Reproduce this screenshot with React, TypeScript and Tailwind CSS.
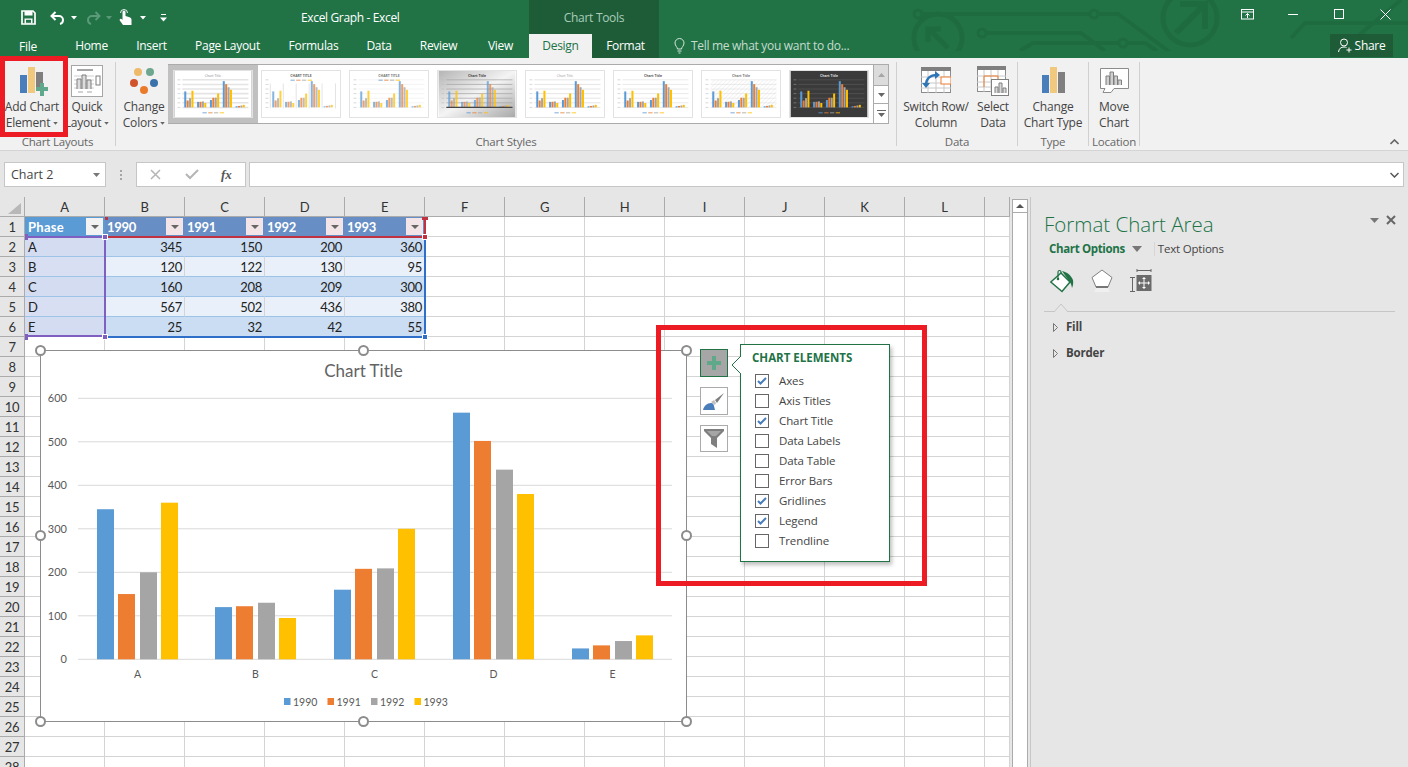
import React from "react";

const COLORS = ["#5b9bd5", "#ed7d31", "#a5a5a5", "#ffc000"];
const YEARS = ["1990", "1991", "1992", "1993"];
const ROWS = [
  { name: "A", values: [345, 150, 200, 360] },
  { name: "B", values: [120, 122, 130, 95] },
  { name: "C", values: [160, 208, 209, 300] },
  { name: "D", values: [567, 502, 436, 380] },
  { name: "E", values: [25, 32, 42, 55] },
];
const COLUMNS = ["A", "B", "C", "D", "E", "F", "G", "H", "I", "J", "K", "L", ""];

const TABS = [
  { label: "Home", width: "w-[61px]" },
  { label: "Insert", width: "w-[59px]" },
  { label: "Page Layout", width: "w-[93px]" },
  { label: "Formulas", width: "w-[79px]" },
  { label: "Data", width: "w-[52px]" },
  { label: "Review", width: "w-[67px]" },
  { label: "View", width: "w-[57px]" },
];

const ELEMENTS = [
  { label: "Axes", on: true },
  { label: "Axis Titles", on: false },
  { label: "Chart Title", on: true },
  { label: "Data Labels", on: false },
  { label: "Data Table", on: false },
  { label: "Error Bars", on: false },
  { label: "Gridlines", on: true },
  { label: "Legend", on: true },
  { label: "Trendline", on: false },
];

const HANDLES = [
  "left-[35px] top-[345px]",
  "left-[358px] top-[345px]",
  "left-[681px] top-[345px]",
  "left-[35px] top-[530px]",
  "left-[681px] top-[530px]",
  "left-[35px] top-[716px]",
  "left-[358px] top-[716px]",
  "left-[681px] top-[716px]",
];

const THUMBS = [
  { title: "Chart Title", titleColor: "#8a8a8a", bg: "#ffffff", grid: "#e4e4e4", gridW: 1.6 },
  { title: "CHART TITLE", titleColor: "#666666", bg: "#ffffff", grid: "#ffffff", gridW: 0, bold: true, top: true, dividers: true, pale: true },
  { title: "CHART TITLE", titleColor: "#777777", bg: "#ffffff", grid: "#ececec", gridW: 0.6, bold: true, top: true, pale: true },
  { title: "Chart Title", titleColor: "#444444", bg: "url(#thumbGray)", grid: "#a8a8a8", gridW: 0.8, bold: true, axis: "#444444", pale: true },
  { title: "Chart Title", titleColor: "#999999", bg: "#ffffff", grid: "#e4e4e4", gridW: 1 },
  { title: "Chart Title", titleColor: "#555555", bg: "#ffffff", grid: "#e4e4e4", gridW: 0.8, bold: true },
  { title: "Chart Title", titleColor: "#777777", bg: "#ffffff", grid: "#d8d8d8", gridW: 0.5, bold: true, hatch: true },
  { title: "Chart Title", titleColor: "#dddddd", bg: "#3b3b3b", grid: "#5c5c5c", gridW: 0.6, bold: true },
];

type Thumb = (typeof THUMBS)[number] & { top?: boolean; dividers?: boolean; pale?: boolean; axis?: string; hatch?: boolean };

function MiniChart({ style, index }: { style: Thumb; index: number }) {
  const base = 38;
  const gx = [10, 23.4, 36.8, 50.2, 63.6];
  const dark = style.bg === "#3b3b3b";
  return (
    <svg width="80" height="48" viewBox="0 0 80 48" className="block font-['Open_Sans'] border border-[#e2e2e2]">
      <defs>
        <linearGradient id="thumbGray" x1="0" y1="0" x2="1" y2="1">
          <stop offset="0" stopColor="#b5b5b5" />
          <stop offset="0.5" stopColor="#f4f4f4" />
          <stop offset="1" stopColor="#a9a9a9" />
        </linearGradient>
        <pattern id={`hatch${index}`} width="3" height="3" patternUnits="userSpaceOnUse" patternTransform="rotate(45)">
          <line x1="0" y1="0" x2="0" y2="3" stroke="#d6d6d6" strokeWidth="0.6" />
        </pattern>
      </defs>
      <rect width="80" height="48" fill={style.bg} />
      <text x="40" y="6" textAnchor="middle" fontSize="3.6" fontWeight={style.bold ? 700 : 400} fill={style.titleColor}>
        {style.title}
      </text>
      {style.hatch && <rect x="9" y="9" width="68" height="29" fill={`url(#hatch${index})`} />}
      {[0, 1, 2, 3, 4, 5, 6].map((i) => (
        <g key={i}>
          <line x1="8" x2="77" y1={base - i * 4.8} y2={base - i * 4.8} stroke={style.grid} strokeWidth={style.gridW} />
          <line x1="3" x2="6" y1={base - i * 4.8} y2={base - i * 4.8} stroke={dark ? "#999999" : "#bbbbbb"} strokeWidth="0.6" />
        </g>
      ))}
      {style.dividers &&
        [8, 21.5, 35, 48.5, 62, 76].map((x) => <line key={x} x1={x} x2={x} y1="13" y2="39" stroke="#cfcfcf" strokeWidth="0.6" />)}
      {ROWS.map((row, g) =>
        row.values.map((v, s) => (
          <rect
            key={s}
            x={gx[g] + s * 2.5}
            y={base - (v * 29) / 600}
            width="2.1"
            height={(v * 29) / 600}
            fill={COLORS[s]}
            opacity={style.pale ? 0.75 : 1}
          />
        ))
      )}
      {style.axis && <line x1="8" x2="77" y1={base} y2={base} stroke={style.axis} strokeWidth="1.4" />}
      {[0, 1, 2, 3].map((i) => (
        <rect key={i} x={29 + i * 6} y={style.top ? 9 : 43} width="4.5" height="1.2" fill={COLORS[i]} opacity="0.7" />
      ))}
    </svg>
  );
}

function SaveIcon() {
  return (
    <svg width="15" height="15" viewBox="0 0 15 15" className="ml-[21px]">
      <path d="M1 1h11l2 2v11H1z" fill="none" stroke="white" strokeWidth="1.7" />
      <rect x="3.5" y="1" width="8" height="4.5" fill="white" />
      <rect x="3.5" y="8.5" width="8" height="5" fill="white" />
      <rect x="5" y="9.8" width="5" height="3" fill="#217346" />
    </svg>
  );
}

function Caret({ dim, className }: { dim?: boolean; className?: string }) {
  return (
    <svg width="6" height="4" viewBox="0 0 6 4" className={className}>
      <path d="M0 0h6L3 3.5z" fill={dim ? "#5a9a78" : "white"} />
    </svg>
  );
}

function ArrowIcon({ flip, color, className }: { flip?: boolean; color: string; className?: string }) {
  return (
    <svg width="15" height="14" viewBox="0 0 15 14" className={className}>
      <g transform={flip ? "translate(15 0) scale(-1 1)" : undefined} fill="none" stroke={color} strokeWidth="2">
        <path d="M5.5 1 1.5 5l4 4" />
        <path d="M2 5h7a4 4 0 0 1 4 4c0 2-1 3.500-3 4" />
      </g>
    </svg>
  );
}

function TouchIcon() {
  return (
    <svg width="13" height="17" viewBox="0 0 13 17" className="ml-[7px]">
      <path d="M3.5 7V3a1.500 1.500 0 0 1 3 0v4l4 1.200c1.500.5 2 1.300 2 2.800v5H4L.8 11.500c-.7-1 .5-2.500 1.700-1.500l1 1z" fill="white" />
      <path d="M1.500 4a3.500 3.500 0 0 1 7 0" fill="none" stroke="white" strokeWidth="0.9" />
    </svg>
  );
}

function CircuitArt() {
  return (
    <svg width="500" height="51" viewBox="908 0 500 51" className="absolute right-0 top-0 pointer-events-none" fill="none" stroke="#1f6b40" strokeWidth="4">
      <circle cx="938" cy="38" r="24" strokeWidth="5" />
      <path d="M948 48 930 30M928 42V29h13" strokeWidth="5" />
      <circle cx="918" cy="14" r="4" strokeWidth="3" />
      <path d="M922 14h168" />
      <circle cx="1094" cy="14" r="4" strokeWidth="3" />
      <path d="M1098 14h20l52 38" />
      <circle cx="982" cy="33" r="4" strokeWidth="3" />
      <path d="M986 33h95l24 18" />
      <path d="M1020 51l13-8h86" />
      <circle cx="1123" cy="43" r="4" strokeWidth="3" />
      <path d="M1127 43h18l12 8" />
      <circle cx="1190" cy="18" r="27" strokeWidth="5" />
      <path d="M1176 33 1205 4M1180 4h25v25" strokeWidth="6" />
      <path d="M1291 38l14-15h103" />
      <path d="M1340 51l61-51" />
    </svg>
  );
}

function AddChartIcon() {
  return (
    <svg width="30" height="30" viewBox="0 0 30 30" className="ml-[4px]">
      <rect x="1" y="9" width="7" height="18" fill="#4a7ebb" />
      <rect x="9" y="1" width="7" height="26" fill="#f0c97e" />
      <rect x="17" y="6" width="7" height="18" fill="#7f7f7f" />
      <rect x="17" y="21" width="12" height="4" fill="#60a88c" />
      <rect x="21" y="17" width="4" height="13" fill="#60a88c" />
    </svg>
  );
}

function QuickLayoutIcon() {
  return (
    <svg width="32" height="32" viewBox="0 0 32 32">
      <rect x="0.5" y="0.5" width="31" height="31" fill="white" stroke="#a6a6a6" />
      <rect x="6" y="4" width="16" height="2" fill="#a6a6a6" />
      <path d="M3 11h20M3 15h20M3 19h20M3 23h20" stroke="#cfcfcf" />
      <path d="M6 24V14h4v10M11 24V10h4v14M16 24V15h4v9" fill="#dcdcdc" stroke="#7f7f7f" />
      <rect x="25" y="11" width="4" height="9" fill="white" stroke="#7f7f7f" />
      <path d="M7 27h5M16 27h5" stroke="#a6a6a6" />
    </svg>
  );
}

function ColorsIcon() {
  return (
    <svg width="30" height="28" viewBox="0 0 30 28">
      <circle cx="9" cy="5" r="4" fill="#efb96a" />
      <circle cx="21" cy="5" r="4" fill="#6da78f" />
      <circle cx="5" cy="16" r="4" fill="#d1532c" />
      <circle cx="25" cy="16" r="4" fill="#3a72ab" />
      <circle cx="15" cy="23" r="4" fill="#ea7b2c" />
    </svg>
  );
}

function SwitchIcon() {
  return (
    <svg width="30" height="27" viewBox="0 0 30 27">
      <rect x="0.5" y="0.5" width="29" height="25" fill="white" stroke="#8c8c8c" />
      <rect x="0" y="0" width="30" height="4" fill="#7f7f7f" />
      <path d="M0 10h30M0 16h30M0 21h30M7 4v22M15 4v22M23 4v22" stroke="#c8c8c8" />
      <rect x="20" y="10" width="10" height="7" fill="white" stroke="#ed7d31" />
      <path d="M5 18c0-6 4-10 11-10" fill="none" stroke="#2e75b6" strokeWidth="2.400" />
      <path d="M14 4l5 4-5 4zM1 16l4 5 4-5z" fill="#2e75b6" />
    </svg>
  );
}

function SelectDataIcon() {
  return (
    <svg width="32" height="30" viewBox="0 0 32 30">
      <rect x="0.5" y="0.5" width="28" height="25" fill="white" stroke="#8c8c8c" />
      <rect x="0" y="0" width="29" height="4" fill="#7f7f7f" />
      <path d="M0 10h29M0 16h29M0 21h29M7 4v22M14 4v22M21 4v22" stroke="#c8c8c8" />
      <path d="M7 10h14v6M7 10v11" fill="none" stroke="#ed7d31" />
      <rect x="14.500" y="13.500" width="17" height="16" fill="white" stroke="#7f7f7f" />
      <path d="M18 27V21h3v6M22 27V17h3v10M26 27V22h3v5" fill="#d9d9d9" stroke="#7f7f7f" />
    </svg>
  );
}

function BarsIcon() {
  return (
    <svg width="24" height="27" viewBox="0 0 24 27" className="ml-[2px]">
      <rect x="0" y="8" width="7" height="18" fill="#4a7ebb" />
      <rect x="8" y="0" width="7" height="26" fill="#f0c97e" />
      <rect x="16" y="5" width="7" height="21" fill="#7f7f7f" />
    </svg>
  );
}

function MoveChartIcon() {
  return (
    <svg width="29" height="26" viewBox="0 0 29 26">
      <path d="M.5.5h28v20H14l-3 4H3l2-4H.5z" fill="white" stroke="#8c8c8c" />
      <path d="M6 17V8h3.500v9M10 17V4h3.500v13M14 17V8h3.500v9M18 17V12h3.500v5" fill="#d0d0d0" stroke="#7f7f7f" />
    </svg>
  );
}

function RibbonButton({
  icon,
  lines,
  caret,
  width,
}: {
  icon: React.ReactNode;
  lines: string[];
  caret?: boolean;
  width: string;
}) {
  return (
    <div className={`flex flex-col items-center ${width}`}>
      <div className="flex h-[37px] items-center justify-center">{icon}</div>
      {lines.map((line, i) => (
        <div key={line} className="flex h-[16px] items-center whitespace-nowrap text-[12px] leading-[16px] tracking-[-0.2px] text-[#444]">
          {line}
          {caret && i === lines.length - 1 && (
            <svg width="5" height="3" viewBox="0 0 6 4" className="ml-[3px]">
              <path d="M0 0h6L3 3.500z" fill="#666" />
            </svg>
          )}
        </div>
      ))}
    </div>
  );
}

function RibbonGroup({ label, width, children }: { label: string; width: string; children: React.ReactNode }) {
  return (
    <div className={`mt-[4px] flex h-[84px] flex-col border-r border-[#d0d0d0] ${width}`}>
      <div className="flex h-[72px] flex-none">{children}</div>
      <div className="flex-none text-center text-[11.500px] leading-[15px] tracking-[-0.2px] text-[#666]">{label}</div>
    </div>
  );
}

function Gallery() {
  return (
    <div className="-ml-[2px] mt-[2px] flex h-[60px] w-[721px] border border-[#ababab] bg-white">
      <div className="flex w-[705px] items-center gap-[8px] pl-[4px]">
        {THUMBS.map((t, i) => (
          <div key={i} className="relative">
            {i === 0 && <div className="absolute -inset-x-[5px] -inset-y-[5px] bg-[#c0c0c0]" />}
            <div className="relative">
              <MiniChart style={t as Thumb} index={i} />
            </div>
          </div>
        ))}
      </div>
      <div className="flex w-[15px] flex-col border-l border-[#ababab]">
        <div className="flex h-[20px] items-center justify-center bg-[#dcdcdc]">
          <svg width="7" height="4" viewBox="0 0 7 4"><path d="M0 4h7L3.500 0z" fill="#a6a6a6" /></svg>
        </div>
        <div className="flex h-[19px] items-center justify-center border-y border-[#ababab]">
          <svg width="7" height="4" viewBox="0 0 7 4"><path d="M0 0h7L3.500 4z" fill="#666" /></svg>
        </div>
        <div className="flex flex-1 items-center justify-center">
          <svg width="9" height="8" viewBox="0 0 9 8"><path d="M0 .5h9" stroke="#666" /><path d="M1 3h7L4.500 7z" fill="#666" /></svg>
        </div>
      </div>
    </div>
  );
}

function TitleBar() {
  return (
    <header className="relative h-[58px] flex-none bg-[#217346] text-white">
      <CircuitArt />
      <div className="relative flex h-[34px]">
        <div className="flex w-[301px] flex-none items-center pt-[1px]">
          <SaveIcon />
          <ArrowIcon color="white" className="ml-[14px]" />
          <Caret className="ml-[6px]" />
          <ArrowIcon flip color="#5a9a78" className="ml-[9px]" />
          <Caret dim className="ml-[5px]" />
          <TouchIcon />
          <Caret className="ml-[8px]" />
          <svg width="7" height="8" viewBox="0 0 7 8" className="ml-[14px]">
            <path d="M1 .5h5" stroke="white" />
            <path d="M0 3.500h7L3.500 7.500z" fill="white" />
          </svg>
        </div>
        <div className="w-[228px] flex-none pt-[9px] text-[12px] leading-[17px] tracking-[-0.35px]">Excel Graph - Excel</div>
        <div className="w-[130px] flex-none bg-[#1e5c38] pt-[9px] text-center text-[12px] leading-[17px] tracking-[-0.3px] text-[#a9cdb9]">Chart Tools</div>
        <div className="flex-1" />
        <div className="flex h-[28px] flex-none">
          <div className="flex w-[46px] items-center justify-center">
            <svg width="13" height="11" viewBox="0 0 13 11" fill="none" stroke="white">
              <rect x="0.500" y="0.500" width="12" height="9.500" />
              <path d="M0 3h13M6.500 9V4.500M4.500 6.500l2-2 2 2" />
            </svg>
          </div>
          <div className="flex w-[46px] items-center justify-center">
            <div className="h-px w-[10px] bg-white" />
          </div>
          <div className="flex w-[46px] items-center justify-center">
            <div className="h-[10px] w-[10px] border border-white" />
          </div>
          <div className="flex w-[46px] items-center justify-center">
            <svg width="11" height="11" viewBox="0 0 11 11" stroke="white">
              <path d="M.5.500l10 10M10.500.500l-10 10" />
            </svg>
          </div>
        </div>
      </div>
      <nav className="relative flex h-[24px] items-stretch text-[12px] tracking-[-0.3px]">
        <div className="mr-[5px] flex w-[56px] items-center justify-center pt-[1px]">File</div>
        {TABS.map((tab) => (
          <div key={tab.label} className={`flex items-center justify-center ${tab.width}`}>
            {tab.label}
          </div>
        ))}
        <div className="flex w-[63px] items-center justify-center bg-[#f1f1f1] text-[#217346]">Design</div>
        <div className="flex w-[67px] items-center justify-center bg-[#1e5c38]">Format</div>
        <div className="ml-[15px] flex items-center gap-[6px] text-[#c5dccf]">
          <svg width="11" height="16" viewBox="0 0 11 16" fill="none" stroke="#d6e6dc">
            <path d="M3.500 11C3.500 9 1 8 1 5a4.500 4.500 0 0 1 9 0c0 3-2.500 4-2.500 6zM3.500 13h4M4.500 15h2" />
          </svg>
          Tell me what you want to do...
        </div>
        <div className="flex-1" />
        <div className="mb-[1px] mr-[15px] flex w-[63px] items-center justify-center gap-[3px] bg-[#1e5c38]">
          <svg width="14" height="15" viewBox="0 0 14 15" fill="none" stroke="white">
            <circle cx="6" cy="4.500" r="3.500" />
            <path d="M.5 14c.5-3.500 2.500-5 5.500-5 1 0 2 .2 2.500.6M8.500 12h5M11 9.500v5" />
          </svg>
          Share
        </div>
      </nav>
    </header>
  );
}

function Ribbon() {
  return (
    <section className="relative flex h-[93px] flex-none border-b border-[#d4d4d4] bg-[#f1f1f1]">
      <RibbonGroup label="Chart Layouts" width="w-[116px]">
        <RibbonButton width="w-[64px]" lines={["Add Chart", "Element"]} caret icon={<AddChartIcon />} />
        <RibbonButton width="w-[46px]" lines={["Quick", "Layout"]} caret icon={<QuickLayoutIcon />} />
      </RibbonGroup>
      <RibbonGroup label="Chart Styles" width="w-[781px]">
        <RibbonButton width="ml-[2px] w-[52px]" lines={["Change", "Colors"]} caret icon={<ColorsIcon />} />
        <Gallery />
      </RibbonGroup>
      <RibbonGroup label="Data" width="w-[121px]">
        <RibbonButton width="w-[78px]" lines={["Switch Row/", "Column"]} icon={<SwitchIcon />} />
        <RibbonButton width="w-[36px]" lines={["Select", "Data"]} icon={<SelectDataIcon />} />
      </RibbonGroup>
      <RibbonGroup label="Type" width="w-[71px]">
        <RibbonButton width="w-[70px]" lines={["Change", "Chart Type"]} icon={<BarsIcon />} />
      </RibbonGroup>
      <RibbonGroup label="Location" width="w-[51px]">
        <RibbonButton width="w-[50px]" lines={["Move", "Chart"]} icon={<MoveChartIcon />} />
      </RibbonGroup>
      <svg width="9" height="6" viewBox="0 0 9 6" className="absolute right-[9px] top-[81px]" fill="none" stroke="#666" strokeWidth="1.600">
        <path d="M.5 5 4.500 1l4 4" />
      </svg>
    </section>
  );
}

function FormulaBar() {
  return (
    <section className="flex h-[46px] flex-none items-center bg-[#e6e6e6] pl-[4px] pr-[4px] pt-[1px]">
      <div className="flex h-[25px] w-[102px] items-center justify-between border border-[#c6c6c6] bg-white pl-[6px] pr-[5px] pt-[1px] text-[12.500px] text-[#444]">
        Chart 2
        <svg width="7" height="4" viewBox="0 0 7 4"><path d="M0 0h7L3.500 4z" fill="#777" /></svg>
      </div>
      <div className="flex w-[30px] justify-center">
        <div className="flex flex-col gap-[2px]">
          <div className="h-[2px] w-[2px] bg-[#a6a6a6]" />
          <div className="h-[2px] w-[2px] bg-[#a6a6a6]" />
          <div className="h-[2px] w-[2px] bg-[#a6a6a6]" />
        </div>
      </div>
      <div className="flex h-[25px] w-[110px] items-center border border-[#c6c6c6] bg-white">
        <svg width="11" height="11" viewBox="0 0 11 11" className="ml-[13px]" stroke="#b5b5b5" strokeWidth="1.500"><path d="M1 1l9 9M10 1l-9 9" /></svg>
        <svg width="14" height="11" viewBox="0 0 14 11" className="ml-[24px]" fill="none" stroke="#b5b5b5" strokeWidth="2"><path d="M1 5l4 4 8-8" /></svg>
        <span className="ml-[22px] font-['Liberation_Serif'] text-[13px] italic font-bold text-[#555]">fx</span>
      </div>
      <div className="ml-[3px] flex h-[25px] flex-1 items-center justify-end border border-[#c6c6c6] bg-white pr-[4px]">
        <svg width="9" height="6" viewBox="0 0 9 6" fill="none" stroke="#555" strokeWidth="1.500"><path d="M.5 1l4 4 4-4" /></svg>
      </div>
    </section>
  );
}

function cellClass(row: number, col: number) {
  if (row === 1 && col === 0) return "bg-[#5b9bd5] text-white font-bold border-[#5b9bd5] pl-[3px] tracking-[0.3px]";
  if (row === 1 && col <= 4) return "bg-[#678fc5] text-white font-bold border-[#678fc5] pl-[2px]";
  if (row >= 2 && row <= 6 && col === 0)
    return `${row % 2 === 0 ? "bg-[#d3dcf0]" : "bg-[#d8dff2]"} border-b-[#9dc3e6] border-r-[#d3dcf0] text-[#222] pl-[3px]`;
  if (row >= 2 && row <= 6 && col <= 4)
    return `${row % 2 === 0 ? "bg-[#cbddf2] border-r-[#cbddf2]" : "bg-[#e9f0f9] border-r-[#d4d4d4]"} border-b-[#9dc3e6] text-[#222] text-right pr-[2px]`;
  return "bg-white border-[#d4d4d4]";
}

function Sheet() {
  const rowNumbers = Array.from({ length: 28 }, (_, i) => i + 1);
  return (
    <div className="grid w-[1010px] flex-none grid-cols-[25px_repeat(12,80px)_25px] auto-rows-[20px] font-['Lato'] text-[13px] leading-[19px] tracking-[-0.3px] text-[#333]">
      <div className="relative border-b border-r border-[#ababab] bg-[#e6e6e6]">
        <svg width="13" height="11" viewBox="0 0 13 11" className="absolute left-[8px] top-[6px]"><path d="M13 0v11H0z" fill="#b8b8b8" /></svg>
      </div>
      {COLUMNS.map((c, i) => (
        <div key={i} className="border-b border-r border-[#ababab] bg-[#e6e6e6] text-center text-[#333] pt-[1px]">{c}</div>
      ))}
      {rowNumbers.map((r) => (
        <React.Fragment key={r}>
          <div className="border-b border-r border-[#ababab] bg-[#e6e6e6] text-center pt-[1px]">{r}</div>
          {COLUMNS.map((_, c) => {
            let text: string | number = "";
            if (r === 1 && c === 0) text = "Phase";
            if (r === 1 && c >= 1 && c <= 4) text = YEARS[c - 1];
            if (r >= 2 && r <= 6 && c === 0) text = ROWS[r - 2].name;
            if (r >= 2 && r <= 6 && c >= 1 && c <= 4) text = ROWS[r - 2].values[c - 1];
            return (
              <div key={c} className={`relative border-b border-r pt-[1px] ${cellClass(r, c)}`}>
                {text}
                {r === 1 && c <= 4 && (
                  <div className={`absolute right-[1px] top-[1px] flex h-[17px] w-[17px] items-center justify-center ${c === 0 ? "bg-[#f2f2f2]" : "bg-[#f2e4e7]"}`}>
                    <svg width="8" height="4" viewBox="0 0 8 4"><path d="M0 0h8L4 4z" fill="#666" /></svg>
                  </div>
                )}
              </div>
            );
          })}
        </React.Fragment>
      ))}
    </div>
  );
}

function RangeHighlights() {
  return (
    <>
      <div className="absolute left-[25px] top-[236px] h-[101px] w-[81px] border-y-2 border-r-2 border-[#7f5fbf]" />
      <div className="absolute left-[105px] top-[236px] h-[2px] w-[320px] bg-[#c0323f]" />
      <div className="absolute left-[424px] top-[217px] h-[20px] w-[2px] bg-[#c0323f]" />
      <div className="absolute left-[106px] top-[336px] h-[2px] w-[319px] bg-[#2f6fc9]" />
      <div className="absolute left-[424px] top-[238px] h-[99px] w-[2px] bg-[#2f6fc9]" />
      <div className="absolute left-[102px] top-[234px] h-[6px] w-[6px] border border-white bg-[#7f5fbf]" />
      <div className="absolute left-[102px] top-[334px] h-[6px] w-[6px] border border-white bg-[#7f5fbf]" />
      <div className="absolute left-[25px] top-[234px] h-[6px] w-[3px] bg-[#7f5fbf]" />
      <div className="absolute left-[25px] top-[334px] h-[6px] w-[3px] bg-[#7f5fbf]" />
      <div className="absolute left-[422px] top-[234px] h-[6px] w-[6px] border border-white bg-[#c0323f]" />
      <div className="absolute left-[422px] top-[217px] h-[3px] w-[6px] bg-[#c0323f]" />
      <div className="absolute left-[105px] top-[217px] h-[3px] w-[3px] bg-[#c0323f]" />
      <div className="absolute left-[422px] top-[334px] h-[6px] w-[6px] border border-white bg-[#2f6fc9]" />
    </>
  );
}

function ChartObject() {
  const ticks = [0, 100, 200, 300, 400, 500, 600];
  const groupX = [97, 215, 334, 453, 572];
  const offsets = [0, 21, 43, 64];
  const y = (v: number) => 659.3 - v * 0.435;
  return (
    <>
      <div className="absolute left-[40px] top-[350px] h-[372px] w-[647px] border border-[#8c8c8c] bg-white">
        <svg viewBox="41 351 645 370" className="block h-full w-full font-['Lato']">
          <text x="363.500" y="377" textAnchor="middle" fontSize="17" fill="#636363">Chart Title</text>
          {ticks.map((t) => (
            <g key={t}>
              <line x1="78" x2="672" y1={y(t)} y2={y(t)} stroke="#d9d9d9" />
              <text x="67" y={y(t) + 4} textAnchor="end" fontSize="11" fill="#595959">{t}</text>
            </g>
          ))}
          {ROWS.map((row, g) => (
            <g key={row.name}>
              {row.values.map((v, s) => (
                <rect key={s} x={groupX[g] + offsets[s]} y={y(v)} width="17" height={v * 0.435} fill={COLORS[s]} />
              ))}
              <text x={groupX[g] + 40.500} y="678" textAnchor="middle" fontSize="10.500" fill="#595959">{row.name}</text>
            </g>
          ))}
          {YEARS.map((year, i) => (
            <g key={year}>
              <rect x={284 + i * 43.500} y="698" width="6.500" height="7" fill={COLORS[i]} />
              <text x={293 + i * 43.500} y="705.500" fontSize="10.500" fill="#595959">{year}</text>
            </g>
          ))}
        </svg>
      </div>
      {HANDLES.map((pos) => (
        <div key={pos} className={`absolute h-[11px] w-[11px] rounded-full border-2 border-[#8c8c8c] bg-white ${pos}`} />
      ))}
    </>
  );
}

function ChartButtons() {
  return (
    <div className="absolute left-[700px] top-[349px] flex flex-col gap-[10px]">
      <div className="flex h-[28px] w-[28px] items-center justify-center border border-[#217346] bg-[#a6a6a6]">
        <svg width="16" height="16" viewBox="0 0 16 16"><path d="M6 1h4v5h5v4h-5v5H6v-5H1V6h5z" fill="#5fa98a" /></svg>
      </div>
      <div className="flex h-[28px] w-[28px] items-center justify-center border border-[#ababab] bg-white">
        <svg width="22" height="20" viewBox="0 0 22 20">
          <path d="M21 2 12 9l2 3z" fill="#7f7f7f" />
          <path d="M8 11l3-2 2 3-1 2z" fill="#bfbfbf" />
          <path d="M0 19c1-4 4-7 8-7 2 0 3 2 3 3l1 4z" fill="#4a7ebb" />
        </svg>
      </div>
      <div className="flex h-[27px] w-[28px] items-center justify-center border border-[#ababab] bg-white">
        <svg width="20" height="19" viewBox="0 0 20 19">
          <path d="M0 0h20v2l-7 7v10l-6-4V9L0 2z" fill="#7f7f7f" />
          <path d="M3 2h14l-5 5H8z" fill="#a6a6a6" />
        </svg>
      </div>
    </div>
  );
}

function ElementsPopup() {
  return (
    <div className="absolute left-[740px] top-[344px] h-[218px] w-[150px] border border-[#217346] bg-white pl-[11px] pt-[5px] shadow-[2px_3px_4px_rgba(0,0,0,0.25)]">
      <svg width="10" height="18" viewBox="0 0 10 18" className="absolute -left-[10px] top-[11px]">
        <path d="M10 0 1 9l9 9" fill="white" stroke="#217346" />
      </svg>
      <div className="h-[20px] whitespace-nowrap text-[11.500px] font-bold leading-[16px] text-[#217346]">CHART ELEMENTS</div>
      <ul className="pl-[3px] pt-[1px]">
        {ELEMENTS.map((el) => (
          <li key={el.label} className="flex h-[20px] items-center gap-[10px] text-[11.500px] tracking-[-0.1px] text-[#444]">
            <span className="flex h-[14px] w-[14px] items-center justify-center border border-[#666]">
              {el.on && (
                <svg width="10" height="8" viewBox="0 0 10 8" fill="none" stroke="#4a7ebb" strokeWidth="2"><path d="M1 4l2.500 2.500L9 1" /></svg>
              )}
            </span>
            {el.label}
          </li>
        ))}
      </ul>
    </div>
  );
}

function FormatPane() {
  return (
    <aside className="relative flex-1 border-l border-[#c6c6c6] bg-[#e6e6e6] pl-[13px] pr-[13px] pt-[13px] text-[#444]">
      <div className="text-[20.500px] font-light leading-[28px] text-[#217346]">Format Chart Area</div>
      <svg width="9" height="5" viewBox="0 0 9 5" className="absolute right-[29px] top-[21px]"><path d="M0 0h9L4.500 5z" fill="#777" /></svg>
      <svg width="10" height="10" viewBox="0 0 10 10" className="absolute right-[12px] top-[18px]" stroke="#666" strokeWidth="2"><path d="M1 1l8 8M9 1l-8 8" /></svg>
      <div className="mt-[1px] flex h-[20px] items-center pl-[5px] text-[11.500px] tracking-[-0.2px]">
        <span className="font-bold tracking-[-0.35px] text-[#217346]">Chart Options</span>
        <svg width="10" height="6" viewBox="0 0 10 6" className="ml-[7px]"><path d="M0 0h10L5 6z" fill="#777" /></svg>
        <span className="ml-[12px] mr-[4px] h-[14px] w-px bg-[#d6d6d6]" />
        <span className="-ml-[1px]">Text Options</span>
      </div>
      <div className="mt-[9px] flex h-[26px] items-center gap-[17px] pl-[6px]">
        <svg width="24" height="24" viewBox="0 0 24 24" fill="none">
          <path d="M11 4 .8 13 12 22.500 20 13z" fill="white" stroke="#217346" strokeWidth="1.500" />
          <path d="M8 9V3a1.500 1.500 0 0 1 3 0v2" stroke="#217346" strokeWidth="1.200" />
          <circle cx="8" cy="10" r="1.300" fill="#217346" />
          <path d="M12 2c5 1 9 4 11 9 .5 3 0 6-1 8-.5-3-1-5-3-7z" fill="#217346" />
        </svg>
        <svg width="22" height="24" viewBox="0 0 22 24">
          <path d="M11 1l10 7.500L17 18H5L1 8.500z" fill="white" stroke="#808080" />
          <path d="M5 18h12" stroke="#777" strokeWidth="2" />
          <path d="M5 19h12l2 4H3z" fill="#f0f0f0" />
        </svg>
        <svg width="22" height="24" viewBox="0 0 22 24">
          <path d="M7 1.500h14M7 0v3M21 0v3M0 8.500h5M0 22.500h5M2.500 8.500v14" stroke="#666" fill="none" />
          <rect x="6.500" y="6" width="15" height="16" fill="#6b6b6b" />
          <path d="M14 10v8M10 14h8" stroke="white" />
          <path d="M14 8l-2 2h4zM14 20l-2-2h4zM8 14l2-2v4zM20 14l-2-2v4z" fill="white" />
        </svg>
      </div>
      <div className="relative mt-[17px] h-[1px] w-[351px] bg-[#c6c6c6]">
        <svg width="14" height="8" viewBox="0 0 14 8" className="absolute left-[10px] -top-[7px]">
          <path d="M0 8 7 0l7 8" fill="#e6e6e6" stroke="#c6c6c6" />
        </svg>
      </div>
      {["Fill", "Border"].map((name, i) => (
        <div key={name} className={`flex h-[16px] items-center gap-[8px] pl-[9px] text-[11.500px] font-bold tracking-[-0.2px] ${i === 0 ? "mt-[7px]" : "mt-[10px]"}`}>
          <svg width="5" height="9" viewBox="0 0 5 9"><path d="M.5.500l4 4-4 4z" fill="none" stroke="#777" /></svg>
          {name}
        </div>
      ))}
    </aside>
  );
}

function Scrollbar() {
  return (
    <div className="ml-[2px] mt-[2px] w-[16px] flex-none border-x border-[#ababab] bg-white">
      <div className="flex h-[14px] items-center justify-center border-y border-[#ababab]">
        <svg width="8" height="4" viewBox="0 0 8 4"><path d="M0 4h8L4 0z" fill="#555" /></svg>
      </div>
    </div>
  );
}

export default function App() {
  return (
    <div className="relative flex h-[767px] w-[1408px] flex-col overflow-hidden bg-[#e6e6e6] font-['Open_Sans',sans-serif]">
      <TitleBar />
      <Ribbon />
      <FormulaBar />
      <main className="flex min-h-0 flex-1">
        <Sheet />
        <Scrollbar />
        <div className="w-[2px] flex-none" />
        <FormatPane />
      </main>
      <RangeHighlights />
      <ChartObject />
      <ChartButtons />
      <ElementsPopup />
      <div className="absolute left-0 top-[56px] h-[81px] w-[68px] border-[5px] border-[#ed1c24]" />
      <div className="absolute left-[656px] top-[325px] h-[261px] w-[271px] border-[5px] border-[#ed1c24]" />
    </div>
  );
}
